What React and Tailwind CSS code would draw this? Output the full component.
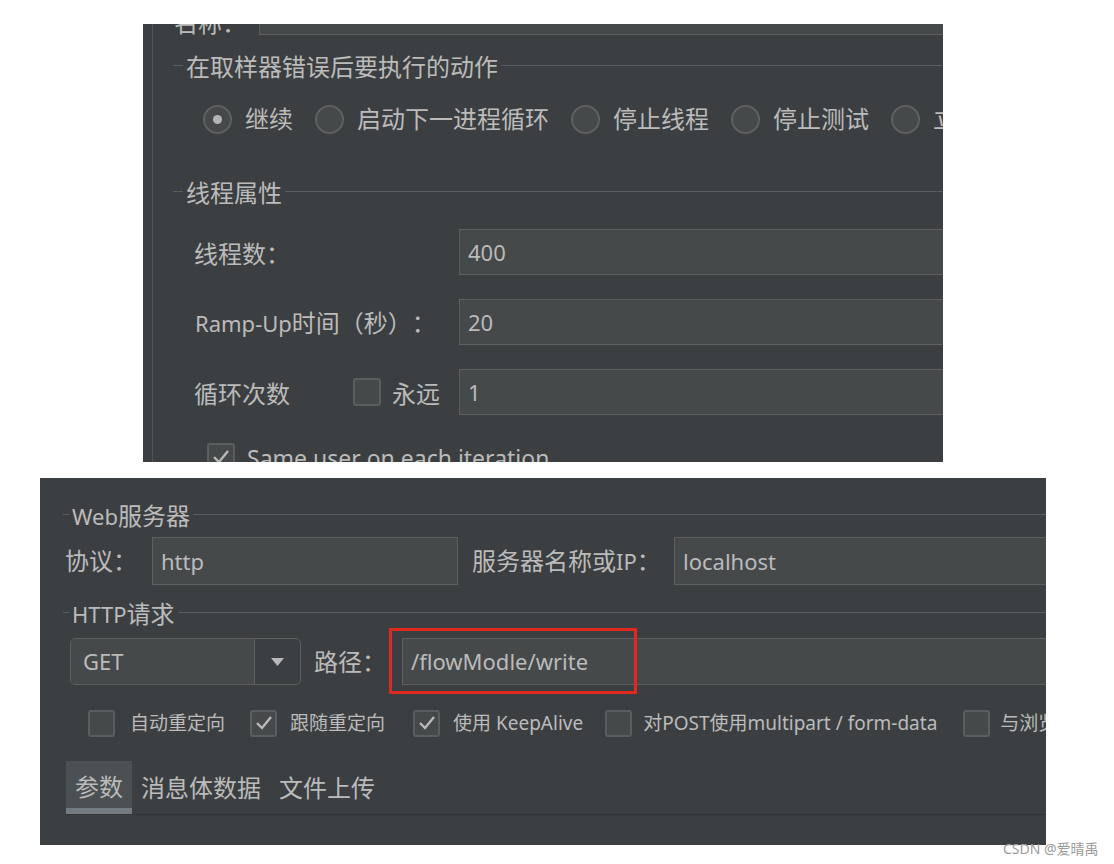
import React from "react";

// Latin parts of mixed labels are set a bit smaller, like Segoe UI next to YaHei
function L({ children }) {
    return <span className="text-[22px]">{children}</span>
}

// Swing style titled border: short dash, title, long line
function Title({ dash, children }) {
    return (
        <div className="flex items-center h-[32px] leading-[32px] text-[24px] text-[#bbbbbb] whitespace-nowrap">
            <div className="h-px bg-[#5b5e60] -translate-y-[2px]" style={{ width: dash }} />
            <div className="px-[3px]">{children}</div>
            <div className="flex-1 h-px bg-[#5b5e60] -translate-y-[2px]" />
        </div>
    )
}

function Field({ value, className }) {
    return (
        <div className={"h-full bg-[#45494a] border border-[#5e6060] flex items-center pl-[8px] text-[22px] text-[#bbbbbb] " + (className || "")}>
            {value}
        </div>
    )
}

function Radio({ checked, label }) {
    return (
        <div className="flex items-center gap-[13px] shrink-0">
            <div className="w-[29px] h-[29px] rounded-full bg-[#45494a] border-2 border-[#5e6060] flex items-center justify-center">
                {checked && <div className="w-[9px] h-[9px] rounded-full bg-[#b4b4b4]" />}
            </div>
            <span>{label}</span>
        </div>
    )
}

function Check({ checked, size = 28 }) {
    return (
        <div className="shrink-0 bg-[#45494a] border-2 border-[#5b5e60] rounded-[3px] flex items-center justify-center" style={{ width: size, height: size }}>
            {checked && (
                <svg width="18" height="16" viewBox="0 0 18 16">
                    <polyline points="2,8 7,13 16,2" fill="none" stroke="#b8b8b8" strokeWidth="2.4" />
                </svg>
            )}
        </div>
    )
}

function ThreadGroup() {
    return (
        <div className="ml-[143px] mt-[24px] w-[800px] h-[438px] shrink-0 bg-[#3c3f41] overflow-hidden flex">
            <div className="w-[9px] shrink-0" />
            <div className="w-px shrink-0 bg-[#515456]" />

            <div className="flex-1 flex flex-col text-[24px] text-[#bbbbbb] *:shrink-0">

                {/* cut-off name row at the top */}
                <div className="flex h-[46px] -mt-[35px]">
                    <div className="w-[106px] pl-[21px] self-end leading-[24px]">名称：</div>
                    <Field value="" className="flex-1 -mr-[10px]" />
                </div>

                {/* on sampler error */}
                <div className="mt-[16px] pl-[20px]">
                    <Title dash={10}>在取样器错误后要执行的动作</Title>
                </div>
                <div className="mt-[20px] h-[32px] pl-[50px] flex items-center gap-[22px] whitespace-nowrap">
                    <Radio checked label="继续" />
                    <Radio label="启动下一进程循环" />
                    <Radio label="停止线程" />
                    <Radio label="停止测试" />
                    <Radio label="立即停止测试" />
                </div>

                {/* thread properties */}
                <div className="mt-[42px] pl-[20px]">
                    <Title dash={10}>线程属性</Title>
                </div>

                <div className="mt-[20px] h-[46px] flex items-center">
                    <div className="w-[306px] pl-[41px] translate-y-[2px]">线程数：</div>
                    <Field value="400" className="flex-1 -mr-[10px]" />
                </div>
                <div className="mt-[24px] h-[46px] flex items-center">
                    <div className="w-[306px] pl-[42px] whitespace-nowrap translate-y-[1px]"><L>Ramp-Up</L>时间（秒）：</div>
                    <Field value="20" className="flex-1 -mr-[10px]" />
                </div>
                <div className="mt-[24px] h-[46px] flex items-center">
                    <div className="w-[200px] pl-[41px] translate-y-[2px]">循环次数</div>
                    <Check />
                    <div className="w-[78px] pl-[11px] translate-y-[2px]">永远</div>
                    <Field value="1" className="flex-1 -mr-[10px]" />
                </div>
                <div className="mt-[28px] h-[28px] pl-[54px] flex items-center gap-[12px] whitespace-nowrap">
                    <Check checked />
                    <span className="text-[23px] translate-y-[1px]">Same user on each iteration</span>
                </div>
            </div>
        </div>
    )
}

function HttpSampler() {
    return (
        <div className="ml-[40px] mt-[16px] w-[1006px] h-[367px] shrink-0 bg-[#3c3f41] overflow-hidden flex flex-col text-[24px] text-[#bbbbbb] *:shrink-0">

            <div className="mt-[22px] pl-[23px]">
                <Title dash={6}><L>Web</L>服务器</Title>
            </div>
            <div className="mt-[5px] h-[48px] flex items-center whitespace-nowrap">
                <div className="w-[112px] pl-[25px]">协议：</div>
                <Field value="http" className="w-[306px]" />
                <div className="w-[216px] pl-[14px]">服务器名称或<L>IP</L>：</div>
                <Field value="localhost" className="flex-1 -mr-[10px]" />
            </div>

            <div className="mt-[13px] pl-[23px]">
                <Title dash={6}><L>HTTP</L>请求</Title>
            </div>
            <div className="mt-[8px] h-[47px] pl-[30px] flex items-center whitespace-nowrap">
                {/* method combo */}
                <div className="w-[231px] h-full flex border border-[#5e6060] rounded-[5px] overflow-hidden">
                    <div className="w-[184px] bg-[#45494a] border-r border-[#5e6060] flex items-center pl-[12px] text-[22px]">GET</div>
                    <div className="flex-1 flex items-center justify-center">
                        <svg width="13" height="8" viewBox="0 0 13 8"><polygon points="0,0 13,0 6.5,8" fill="#b8b8b8" /></svg>
                    </div>
                </div>
                <div className="w-[101px] pl-[13px]">路径：</div>
                <div className="relative flex-1 h-full -mr-[10px]">
                    <Field value="/flowModle/write" className="w-full" />
                    <div className="absolute -left-[13px] -top-[10px] w-[248px] h-[66px] border-[3px] border-[#e0281f]" />
                </div>
            </div>

            {/* options */}
            <div className="mt-[24px] h-[28px] pl-[48px] flex items-center whitespace-nowrap text-[19px]">
                <div className="flex items-center gap-[15px]"><Check size={27} /><span>自动重定向</span></div>
                <div className="ml-[25px] flex items-center gap-[13px]"><Check checked size={27} /><span>跟随重定向</span></div>
                <div className="ml-[28px] flex items-center gap-[13px]"><Check checked size={27} /><span>使用 KeepAlive</span></div>
                <div className="ml-[22px] flex items-center gap-[11px]"><Check size={27} /><span>对POST使用multipart / form-data</span></div>
                <div className="ml-[26px] flex items-center gap-[10px]"><Check size={27} /><span>与浏览器兼容的头</span></div>
            </div>

            {/* tabs */}
            <div className="mt-[24px] h-[54px] ml-[26px] flex border-b border-[#323436] whitespace-nowrap">
                <div className="px-[9px] bg-[#4b5053] border-b-[6px] border-[#737a80] flex items-center pt-[4px]">参数</div>
                <div className="px-[9px] flex items-center">消息体数据</div>
                <div className="px-[9px] flex items-center">文件上传</div>
            </div>
        </div>
    )
}

export default function App() {
    return (
        <div className="relative w-[1114px] h-[864px] bg-white overflow-hidden flex flex-col font-['Noto_Sans','Noto_Sans_CJK_SC',sans-serif] [text-spacing-trim:space-all]">
            <ThreadGroup />
            <HttpSampler />

            {/* watermark */}
            <div className="absolute left-[1003px] top-[838px] text-[14px] text-[#9a9a9a] whitespace-nowrap">CSDN @爱晴禹</div>
        </div>
    )
}
